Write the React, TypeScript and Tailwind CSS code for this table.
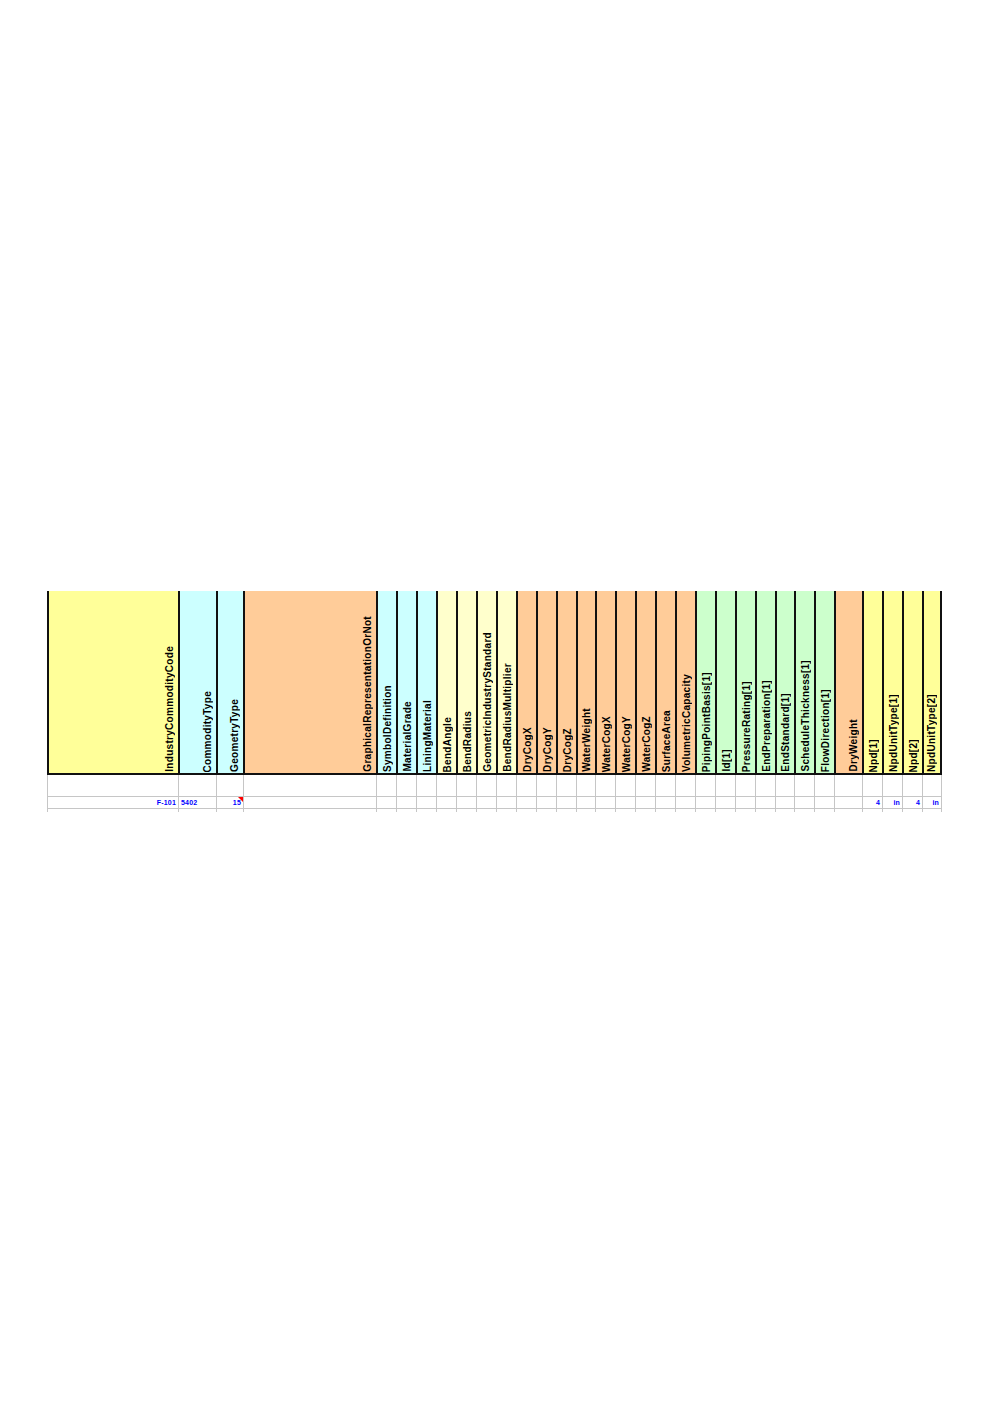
type Col = {
  name: string;
  w: string;
  bg: string;
  val?: string;
  left?: boolean;
  note?: boolean;
};

const cols: Col[] = [
  { name: "IndustryCommodityCode", w: "w-[131px]", bg: "bg-[#ffff99]", val: "F-101" },
  { name: "CommodityType", w: "w-[38px]", bg: "bg-[#ccffff]", val: "5402", left: true },
  { name: "GeometryType", w: "w-[27px]", bg: "bg-[#ccffff]", val: "15", note: true },
  { name: "GraphicalRepresentationOrNot", w: "w-[133px]", bg: "bg-[#ffcc99]" },
  { name: "SymbolDefinition", w: "w-[20px]", bg: "bg-[#ccffff]" },
  { name: "MaterialGrade", w: "w-[20px]", bg: "bg-[#ccffff]" },
  { name: "LiningMaterial", w: "w-[20px]", bg: "bg-[#ccffff]" },
  { name: "BendAngle", w: "w-[20px]", bg: "bg-[#ffffcc]" },
  { name: "BendRadius", w: "w-[20px]", bg: "bg-[#ffffcc]" },
  { name: "GeometricIndustryStandard", w: "w-[20px]", bg: "bg-[#ffffcc]" },
  { name: "BendRadiusMultiplier", w: "w-[20px]", bg: "bg-[#ffffcc]" },
  { name: "DryCogX", w: "w-[20px]", bg: "bg-[#ffcc99]" },
  { name: "DryCogY", w: "w-[20px]", bg: "bg-[#ffcc99]" },
  { name: "DryCogZ", w: "w-[20px]", bg: "bg-[#ffcc99]" },
  { name: "WaterWeight", w: "w-[19px]", bg: "bg-[#ffcc99]" },
  { name: "WaterCogX", w: "w-[20px]", bg: "bg-[#ffcc99]" },
  { name: "WaterCogY", w: "w-[20px]", bg: "bg-[#ffcc99]" },
  { name: "WaterCogZ", w: "w-[20px]", bg: "bg-[#ffcc99]" },
  { name: "SurfaceArea", w: "w-[20px]", bg: "bg-[#ffcc99]" },
  { name: "VolumetricCapacity", w: "w-[20px]", bg: "bg-[#ffcc99]" },
  { name: "PipingPointBasis[1]", w: "w-[20px]", bg: "bg-[#ccffcc]" },
  { name: "Id[1]", w: "w-[20px]", bg: "bg-[#ccffcc]" },
  { name: "PressureRating[1]", w: "w-[20px]", bg: "bg-[#ccffcc]" },
  { name: "EndPreparation[1]", w: "w-[20px]", bg: "bg-[#ccffcc]" },
  { name: "EndStandard[1]", w: "w-[19px]", bg: "bg-[#ccffcc]" },
  { name: "ScheduleThickness[1]", w: "w-[20px]", bg: "bg-[#ccffcc]" },
  { name: "FlowDirection[1]", w: "w-[20px]", bg: "bg-[#ccffcc]" },
  { name: "DryWeight", w: "w-[28px]", bg: "bg-[#ffcc99]" },
  { name: "Npd[1]", w: "w-[20px]", bg: "bg-[#ffff99]", val: "4" },
  { name: "NpdUnitType[1]", w: "w-[20px]", bg: "bg-[#ffff99]", val: "in" },
  { name: "Npd[2]", w: "w-[20px]", bg: "bg-[#ffff99]", val: "4" },
  { name: "NpdUnitType[2]", w: "w-[20px]", bg: "bg-[#ffff99]", val: "in" },
];

export default function App() {
  return (
    <div className="min-h-[1403px] w-full bg-white pt-[591px] pl-[47px] font-['Liberation_Sans',Arial,sans-serif]">
      {/* header */}
      <div className="flex">
        {cols.map((c, i) => (
          <div
            key={c.name}
            className={`${c.w} ${c.bg} h-[184px] shrink-0 border-l-2 border-b-2 border-[#111] ${
              i === cols.length - 1 ? "border-r-2" : ""
            } flex items-end justify-end pr-[3px] pb-[1px]`}
          >
            <span className="[writing-mode:vertical-rl] rotate-180 whitespace-nowrap text-[10px] font-bold leading-none tracking-[0.3px] text-black">
              {c.name}
            </span>
          </div>
        ))}
      </div>

      {/* empty row */}
      <div className="flex">
        {cols.map((c, i) => (
          <div
            key={c.name}
            className={`${c.w} h-[22px] shrink-0 border-l border-b border-[#c6c6c6] ${
              i === cols.length - 1 ? "border-r" : ""
            }`}
          />
        ))}
      </div>

      {/* data row */}
      <div className="flex">
        {cols.map((c, i) => (
          <div
            key={c.name}
            className={`${c.w} relative h-[12px] shrink-0 border-l border-b border-[#c6c6c6] ${
              i === cols.length - 1 ? "border-r" : ""
            } flex items-center ${c.left ? "justify-start pl-[2px]" : "justify-end pr-[2px]"}`}
          >
            {c.val && (
              <span className="text-[7px] font-bold leading-none tracking-[0.2px] text-[#0000ff] whitespace-nowrap">{c.val}</span>
            )}
            {c.note && (
              <span className="absolute right-0 top-0 h-0 w-0 border-l-[5px] border-t-[5px] border-l-transparent border-t-[#ff0000]" />
            )}
          </div>
        ))}
      </div>

      {/* cut-off row */}
      <div className="flex">
        {cols.map((c, i) => (
          <div
            key={c.name}
            className={`${c.w} h-[3px] shrink-0 border-l border-[#c6c6c6] ${i === cols.length - 1 ? "border-r" : ""}`}
          />
        ))}
      </div>
    </div>
  );
}
